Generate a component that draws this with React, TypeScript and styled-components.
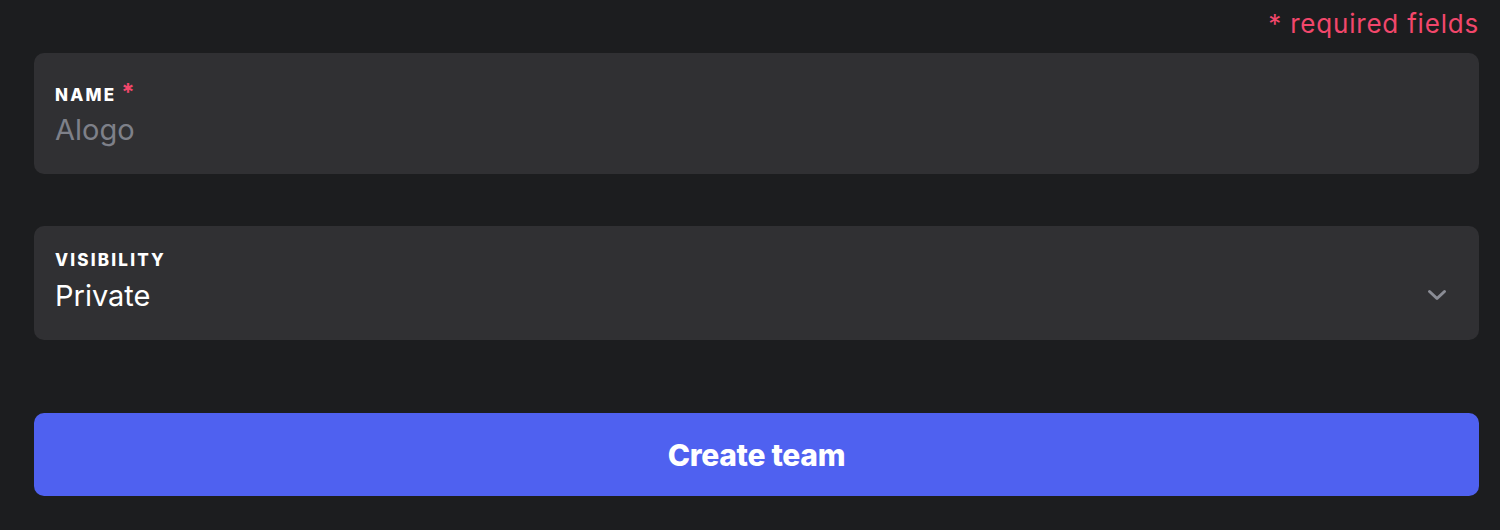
import styled, { createGlobalStyle } from "styled-components"

const GlobalStyle = createGlobalStyle`
	html, body {
		margin: 0;
		padding: 0;
		background-color: #1c1d1f;
	}

	body {
		font-family: "Inter", "Noto Sans", sans-serif;
		-webkit-font-smoothing: antialiased;
	}
`

const Page = styled.div`
	width: 1500px;
	height: 530px;
	box-sizing: border-box;
	padding: 9px 21px 0 34px;

	display: flex;
	flex-direction: column;
`

const Required = styled.div`
	height: 30px;
	margin-bottom: 14px;

	text-align: right;
	font-size: 26px;
	line-height: 30px;
	letter-spacing: 0.8px;
	color: #f2476b;
`

const Field = styled.div<{ $top: number; $after: number }>`
	padding: ${({ $top }) => $top}px 32px 27px 21px;
	margin-bottom: ${({ $after }) => $after}px;

	display: flex;
	align-items: flex-end;
	gap: 16px;

	background-color: #303033;
	border-radius: 10px;
`

const FieldBody = styled.div<{ $gap: number }>`
	flex: 1;

	display: flex;
	flex-direction: column;
	gap: ${({ $gap }) => $gap}px;
`

const Label = styled.label`
	display: block;
	height: 20px;

	font-size: 17px;
	line-height: 20px;
	font-weight: 800;
	letter-spacing: 2.2px;
	text-transform: uppercase;
	color: #ffffff;
`

const Star = styled.span`
	margin-left: 5px;

	font-size: 24px;
	line-height: 0;
	font-weight: 700;
	color: #f2476b;
`

const Input = styled.input`
	width: 100%;
	height: 35px;
	padding: 0;

	background: transparent;
	border: none;
	outline: none;

	font-family: "Inter", "Noto Sans", sans-serif;
	font-size: 29px;
	line-height: 35px;
	color: #ffffff;

	&::placeholder {
		color: #7e8089;
	}
`

const Value = styled.div`
	height: 35px;

	font-size: 29px;
	line-height: 35px;
	color: #ffffff;
`

const Chevron = styled.svg`
	width: 20px;
	height: 12px;
	margin-bottom: 12px;
	flex-shrink: 0;
`

const Button = styled.button`
	height: 83px;

	display: flex;
	align-items: center;
	justify-content: center;

	background-color: #4f61f0;
	border: none;
	border-radius: 10px;

	font-family: "Inter", "Noto Sans", sans-serif;
	font-size: 30px;
	font-weight: 800;
	letter-spacing: -0.3px;
	color: #ffffff;
	cursor: pointer;
`

const App = () => {
	return (
		<>
			<GlobalStyle />
			<Page>
				<Required>* required fields</Required>
				<Field $top={32} $after={52}>
					<FieldBody $gap={7}>
						<Label>
							Name<Star>*</Star>
						</Label>
						<Input placeholder="Alogo" />
					</FieldBody>
				</Field>
				<Field $top={24} $after={73}>
					<FieldBody $gap={8}>
						<Label>Visibility</Label>
						<Value>Private</Value>
					</FieldBody>
					<Chevron viewBox="0 0 20 12" fill="none">
						<path
							d="M2.5 2.5 L10 9.5 L17.5 2.5"
							stroke="#8a8c95"
							strokeWidth="3"
							strokeLinecap="round"
							strokeLinejoin="round"
						/>
					</Chevron>
				</Field>
				<Button>Create team</Button>
			</Page>
		</>
	)
}

export default App
